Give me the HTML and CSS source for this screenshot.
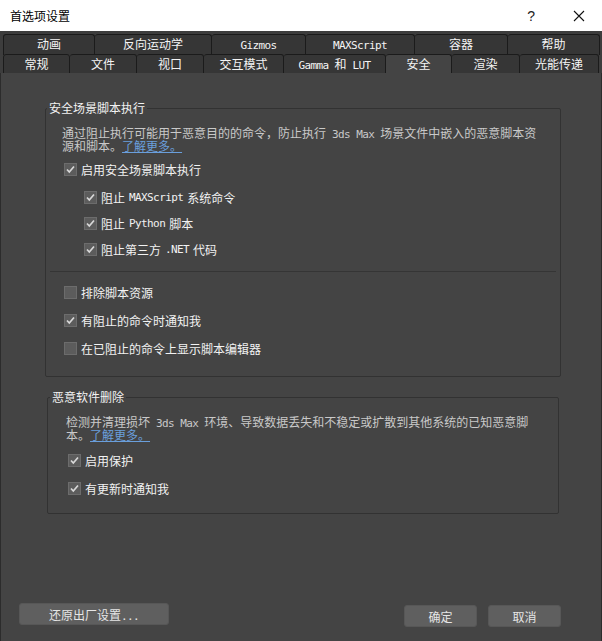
FILE: index.html
```html
<!DOCTYPE html>
<html lang="zh-CN">
    <head>
        <meta charset="utf-8">
        <meta name="viewport" content="width=device-width, initial-scale=1.0">
        <title>首选项设置</title>
        <link rel="stylesheet" href="styles.css">
    </head>
    <body>
        <div class="window">
            <div class="titlebar">
                <span class="title">首选项设置</span>
                <span class="help">?</span>
                <span class="close">
                    <svg width="12" height="12" viewBox="0 0 12 12"><path d="M1 1 L11 11 M11 1 L1 11" stroke="#111" stroke-width="1.1" fill="none"/></svg>
                </span>
            </div>

            <div class="tabs">
                <div class="tabrow upper">
                    <div class="tab">动画</div>
                    <div class="tab">反向运动学</div>
                    <div class="tab"><span class="en">Gizmos</span></div>
                    <div class="tab"><span class="en">MAXScript</span></div>
                    <div class="tab">容器</div>
                    <div class="tab">帮助</div>
                </div>
                <div class="tabrow lower">
                    <div class="tab">常规</div>
                    <div class="tab">文件</div>
                    <div class="tab">视口</div>
                    <div class="tab">交互模式</div>
                    <div class="tab"><span class="en">Gamma </span>和<span class="en"> LUT</span></div>
                    <div class="tab active">安全</div>
                    <div class="tab">渲染</div>
                    <div class="tab">光能传递</div>
                </div>
            </div>

            <div class="pane">
                <fieldset class="group scripts">
                    <legend>安全场景脚本执行</legend>
                    <div class="body">
                        <p class="desc"><span class="line">通过阻止执行可能用于恶意目的的命令，防止执行<span class="en"> 3ds Max </span>场景文件中嵌入的恶意脚本资</span><span class="line">源和脚本。<a href="#">了解更多。 </a></span></p>
                        <div class="row"><span class="cb on"><svg width="11" height="11" viewBox="0 0 11 11"><path d="M2 5.5 L4.3 8 L9 2.5" stroke="#d8d8d8" stroke-width="1.7" fill="none"/></svg></span>启用安全场景脚本执行</div>
                        <div class="sub">
                            <div class="row"><span class="cb on"><svg width="11" height="11" viewBox="0 0 11 11"><path d="M2 5.5 L4.3 8 L9 2.5" stroke="#d8d8d8" stroke-width="1.7" fill="none"/></svg></span>阻止<span class="en"> MAXScript </span>系统命令</div>
                            <div class="row"><span class="cb on"><svg width="11" height="11" viewBox="0 0 11 11"><path d="M2 5.5 L4.3 8 L9 2.5" stroke="#d8d8d8" stroke-width="1.7" fill="none"/></svg></span>阻止<span class="en"> Python </span>脚本</div>
                            <div class="row"><span class="cb on"><svg width="11" height="11" viewBox="0 0 11 11"><path d="M2 5.5 L4.3 8 L9 2.5" stroke="#d8d8d8" stroke-width="1.7" fill="none"/></svg></span>阻止第三方<span class="en"> .NET </span>代码</div>
                        </div>
                    </div>
                    <hr class="sep">
                    <div class="body lower-list">
                        <div class="row tall"><span class="cb"></span>排除脚本资源</div>
                        <div class="row tall"><span class="cb on"><svg width="11" height="11" viewBox="0 0 11 11"><path d="M2 5.5 L4.3 8 L9 2.5" stroke="#d8d8d8" stroke-width="1.7" fill="none"/></svg></span>有阻止的命令时通知我</div>
                        <div class="row tall"><span class="cb"></span>在已阻止的命令上显示脚本编辑器</div>
                    </div>
                </fieldset>

                <fieldset class="group malware">
                    <legend>恶意软件删除</legend>
                    <div class="body">
                        <p class="desc"><span class="line">检测并清理损坏<span class="en"> 3ds Max </span>环境、导致数据丢失和不稳定或扩散到其他系统的已知恶意脚</span><span class="line">本。<a href="#">了解更多。 </a></span></p>
                        <div class="row tall"><span class="cb on"><svg width="11" height="11" viewBox="0 0 11 11"><path d="M2 5.5 L4.3 8 L9 2.5" stroke="#d8d8d8" stroke-width="1.7" fill="none"/></svg></span>启用保护</div>
                        <div class="row tall"><span class="cb on"><svg width="11" height="11" viewBox="0 0 11 11"><path d="M2 5.5 L4.3 8 L9 2.5" stroke="#d8d8d8" stroke-width="1.7" fill="none"/></svg></span>有更新时通知我</div>
                    </div>
                </fieldset>

                <div class="actions">
                    <button class="btn reset">还原出厂设置<span class="en">...</span></button>
                    <div class="confirm">
                        <button class="btn">确定</button>
                        <button class="btn">取消</button>
                    </div>
                </div>
            </div>
        </div>
    </body>
</html>
```

FILE: styles.css
```css
body {
    margin: 0;
    font-family: "Noto Sans CJK SC", "Noto Sans", sans-serif;
    font-size: 12px;
    background-color: #444444;
    overflow: hidden;
}
.window {
    width: 602px;
    height: 641px;
    display: flex;
    flex-direction: column;
}
.en {
    font-family: "DejaVu Sans Mono", monospace;
    font-size: 11px;
    letter-spacing: -0.6px;
}

/* title bar */
.titlebar {
    height: 31px;
    flex: none;
    display: flex;
    align-items: center;
    background-color: #ffffff;
    color: #000000;
}
.title {
    padding-left: 10px;
    font-size: 12px;
    flex: 1;
}
.help {
    font-family: "Liberation Sans", sans-serif;
    font-size: 14px;
    color: #222;
    margin-right: 38px;
}
.close {
    display: flex;
    margin-right: 17px;
}

/* tabs */
.tabs {
    flex: none;
    padding: 3px 2px 0 3px;
    background-color: #3d3d3d;
}
.tabrow {
    display: grid;
}
.upper {
    grid-template-columns: 92px 117px 94px 109px 93px 92px;
    height: 20px;
}
.lower {
    grid-template-columns: 67px 67px 67px 80px 102px 66px 68px 79px;
    height: 19px;
}
.tab {
    background-color: #363636;
    border: 1px solid #1b1b1b;
    border-bottom: none;
    border-left: none;
    border-radius: 3px 3px 0 0;
    color: #f4f4f4;
    text-align: center;
    line-height: 18px;
    white-space: nowrap;
}
.tab:first-child {
    border-left: 1px solid #1b1b1b;
}
.lower .tab {
    border-bottom: 1px solid #1b1b1b;
    line-height: 17px;
}
.lower .tab.active {
    background-color: #444444;
    border-bottom: none;
}

/* content */
.pane {
    flex: 1;
    display: flex;
    flex-direction: column;
    background-color: #444444;
    border-left: 1px solid #2c2c2c;
    border-right: 1px solid #2c2c2c;
}
.group {
    margin: 0;
    padding: 0;
    min-width: 0;
    border: 1px solid #323232;
    border-radius: 2px;
}
.group legend {
    padding: 0 2px;
    line-height: 14px;
    color: #f2f2f2;
}
.scripts {
    margin: 28px 0 0 44px;
    width: 514px;
    padding-bottom: 14px;
}
.scripts legend {
    margin-left: 1px;
}
.malware {
    margin: 13px 0 0 46px;
    width: 510px;
    padding-bottom: 11px;
}
.malware legend {
    margin-left: 2px;
}
.body {
    padding-left: 18px;
}
.scripts .body:first-of-type {
    padding-top: 11px;
}
.malware .body {
    padding-top: 11px;
    padding-left: 20px;
}
.desc {
    margin: 0 0 4px -2px;
    color: #c9c9c9;
    white-space: nowrap;
}
.malware .desc {
    margin-bottom: 5px;
}
.desc .line {
    display: block;
    height: 13px;
    line-height: 13px;
}
.desc a {
    color: #6a9fdc;
    text-decoration: underline;
}
.row {
    height: 26px;
    display: flex;
    align-items: center;
    gap: 4px;
    color: #f2f2f2;
}
.row.tall {
    height: 28px;
}
.sub {
    margin-top: 2px;
    padding-left: 20px;
}
.cb {
    width: 11px;
    height: 11px;
    flex: none;
    display: flex;
    border: 1px solid #6c6c6c;
    background-color: #5c5c5c;
}
.sep {
    margin: 9px 4px 0 4px;
    border: none;
    border-top: 1px solid #353535;
}
.lower-list {
    padding-top: 6px;
}

/* buttons */
.actions {
    margin-top: auto;
    display: flex;
    justify-content: space-between;
    align-items: flex-start;
    padding: 0 40px 14px 18px;
}
.confirm {
    display: flex;
    gap: 11px;
    margin-top: 2px;
}
.btn {
    height: 22px;
    width: 73px;
    padding: 0;
    font-family: "Noto Sans CJK SC", sans-serif;
    font-size: 12px;
    color: #e6e6e6;
    background-color: #5f5f5f;
    border: 1px solid #575757;
    border-radius: 3px;
}
.btn.reset {
    width: 150px;
}
```
